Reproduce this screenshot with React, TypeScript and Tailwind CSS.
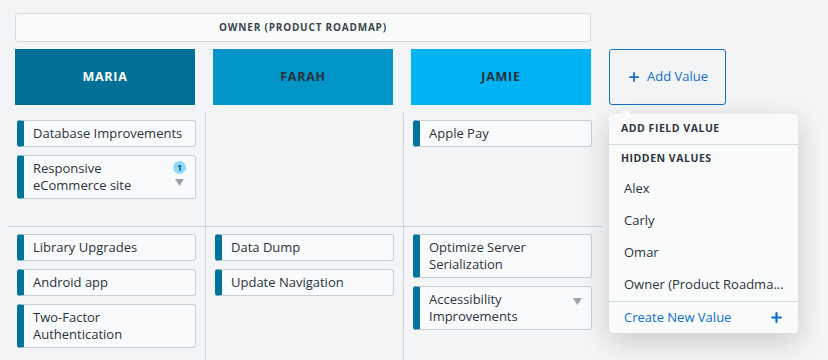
import { Plus } from 'lucide-react'

type Card = { title: string; badge?: number; caret?: boolean }

const COLUMNS = [
  { name: 'MARIA', bg: 'bg-[#007096]', text: 'text-white' },
  { name: 'FARAH', bg: 'bg-[#0094c7]', text: 'text-[#25303b]' },
  { name: 'JAMIE', bg: 'bg-[#00b4f4]', text: 'text-[#25303b]' },
]

const ROWS: Card[][][] = [
  [
    [{ title: 'Database Improvements' }, { title: 'Responsive eCommerce site', badge: 1, caret: true }],
    [],
    [{ title: 'Apple Pay' }],
  ],
  [
    [{ title: 'Library Upgrades' }, { title: 'Android app' }, { title: 'Two-Factor Authentication' }],
    [{ title: 'Data Dump' }, { title: 'Update Navigation' }],
    [{ title: 'Optimize Server Serialization' }, { title: 'Accessibility Improvements', caret: true }],
  ],
]

const Caret = () => (
  <svg width="9" height="7" viewBox="0 0 9 7" className="block">
    <path d="M0 0h9L4.5 7z" fill="#9aa3ac" />
  </svg>
)

const CardItem = ({ card }: { card: Card }) => {
  const hasMeta = card.badge || card.caret
  return (
    <div
      className={`relative w-[179px] rounded-[3px] border border-[#c8ced5] border-l-[7px] border-l-[#00739a] bg-[#f9fafb] py-[4px] pl-[9px] text-[13px] leading-[17px] text-[#2b343d] ${hasMeta ? 'pr-[30px]' : 'pr-[6px]'}`}
    >
      {card.title}
      {hasMeta && (
        <div className="absolute right-[9px] top-[5px] flex flex-col items-center gap-[5px]">
          {card.badge ? (
            <div className="flex h-[13px] w-[13px] items-center justify-center rounded-full bg-[#8fd8f7] text-[9px] font-bold leading-none text-[#11557d]">
              {card.badge}
            </div>
          ) : (
            <div className="h-[1px]" />
          )}
          <Caret />
        </div>
      )}
    </div>
  )
}

const App = () => {
  return (
    <div className="relative h-[360px] w-[828px] overflow-hidden bg-[#f3f4f6] pl-[8px] pt-[13px] font-['Open_Sans',sans-serif]">
      {/* owner field header */}
      <div className="ml-[7px] flex h-[29px] w-[576px] items-center justify-center rounded-[3px] border border-[#d6dade] bg-[#f9fafa] text-[10px] font-bold tracking-[0.08em] text-[#3b444d]">
        OWNER (PRODUCT ROADMAP)
      </div>

      {/* column headers */}
      <div className="ml-[7px] mt-[7px] flex gap-[18px]">
        {COLUMNS.map((c) => (
          <div
            key={c.name}
            className={`flex h-[56px] w-[180px] items-center justify-center text-[12.5px] font-bold tracking-[0.06em] ${c.bg} ${c.text}`}
          >
            {c.name}
          </div>
        ))}
        <button className="flex h-[56px] w-[117px] items-center justify-center gap-[6px] rounded-[3px] border border-[#1a6fc6] text-[13px] text-[#146dc8]">
          <Plus size={14} strokeWidth={3} />
          Add Value
        </button>
      </div>

      {/* swimlanes */}
      <div className="mt-[7px] w-[594px]">
        {ROWS.map((row, ri) => (
          <div key={ri} className={`flex ${ri === 0 ? 'h-[115px] border-b border-[#cfd4da]' : 'h-[140px]'}`}>
            {row.map((cards, ci) => (
              <div
                key={ci}
                className={`flex w-[198px] flex-col gap-[8px] pl-[9px] ${ri === 0 ? 'pt-[8px]' : 'pt-[7px]'} ${ci < 2 ? 'border-r border-[#cfd4da]' : ''}`}
              >
                {cards.map((card) => (
                  <CardItem key={card.title} card={card} />
                ))}
              </div>
            ))}
          </div>
        ))}
      </div>

      {/* add field value dropdown */}
      <div className="absolute left-[609px] top-[114px] w-[189px] rounded-[4px] bg-[#f9fafa] shadow-[0_8px_28px_rgba(0,0,0,0.18)]">
        <div className="absolute -top-[5px] left-[10px] h-0 w-0 border-x-[6px] border-b-[5px] border-x-transparent border-b-[#f9fafa]" />
        <div className="flex h-[31px] items-center border-b border-[#d5dae0] px-[12px] text-[10.5px] font-bold tracking-[0.05em] text-[#2f3841]">
          ADD FIELD VALUE
        </div>
        <div className="flex h-[28px] items-center px-[12px] text-[10.5px] font-bold tracking-[0.05em] text-[#2f3841]">
          HIDDEN VALUES
        </div>
        {['Alex', 'Carly', 'Omar', 'Owner (Product Roadma...'].map((v) => (
          <div key={v} className="flex h-[32px] items-center whitespace-nowrap px-[15px] text-[13px] text-[#2b343d]">
            {v}
          </div>
        ))}
        <div className="flex h-[32px] items-center justify-between border-t border-[#d5dae0] pl-[15px] pr-[14px] text-[13px] text-[#0b6fd6]">
          Create New Value
          <Plus size={15} strokeWidth={3.5} />
        </div>
      </div>
    </div>
  )
}

export default App
